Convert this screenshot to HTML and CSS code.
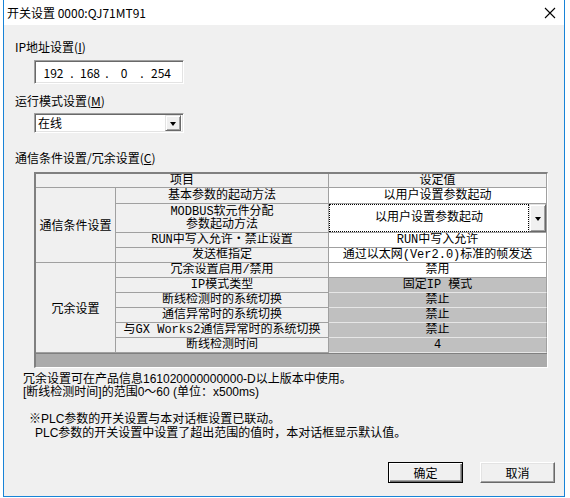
FILE: index.html
```html
<!DOCTYPE html>
<html lang="zh-CN">
<head>
<meta charset="utf-8">
<title>开关设置</title>
<link rel="stylesheet" href="styles.css">
</head>
<body>
<div class="win">
  <div class="titlebar">
    <span class="title">开关设置 0000:QJ71MT91</span>
    <span class="close">
      <svg width="12" height="12" viewBox="0 0 12 12"><path d="M1 1L11 11M11 1L1 11" stroke="#000" stroke-width="1.1" fill="none"/></svg>
    </span>
  </div>
  <div class="content">
    <div class="label lbl-ip">IP地址设置(<u>I</u>)</div>
    <div class="ipbox sunken">
      <span class="s1">192</span><span class="d1">.</span><span class="s2">168</span><span class="d2">.</span><span class="s3">0</span><span class="d3">.</span><span class="s4">254</span>
    </div>
    <div class="label lbl-mode">运行模式设置(<u>M</u>)</div>
    <div class="select sunken">
      <span class="seltext">在线</span>
      <span class="dropbtn"><span class="tri"></span></span>
    </div>
    <div class="label lbl-comm">通信条件设置/冗余设置(<u>C</u>)</div>
    <div class="tbl">
      <div class="c hdr span2">项目</div>
      <div class="c hdr val">设定值</div>
      <div class="c grp g1">通信条件设置</div>
      <div class="c item">基本参数的起动方法</div>
      <div class="c v">以用户设置参数起动</div>
      <div class="c item two">MODBUS软元件分配<br>参数起动方法</div>
      <div class="c v combo"><span class="focus">以用户设置参数起动</span><span class="dropbtn big"><span class="tri"></span></span></div>
      <div class="c item">RUN中写入允许・禁止设置</div>
      <div class="c v">RUN中写入允许</div>
      <div class="c item">发送框指定</div>
      <div class="c v">通过以太网(Ver2.0)标准的帧发送</div>
      <div class="c grp g2">冗余设置</div>
      <div class="c item">冗余设置启用/禁用</div>
      <div class="c v">禁用</div>
      <div class="c item">IP模式类型</div>
      <div class="c v dis">固定IP 模式</div>
      <div class="c item">断线检测时的系统切换</div>
      <div class="c v dis">禁止</div>
      <div class="c item">通信异常时的系统切换</div>
      <div class="c v dis">禁止</div>
      <div class="c item">与GX Works2通信异常时的系统切换</div>
      <div class="c v dis">禁止</div>
      <div class="c item">断线检测时间</div>
      <div class="c v dis">4</div>
      <div class="bar"></div>
    </div>
    <div class="notes">
      <div class="n1">冗余设置可在产品信息161020000000000-D以上版本中使用。</div>
      <div class="n2">[断线检测时间]的范围0～60 (单位：x500ms)</div>
      <div class="n3">※PLC参数的开关设置与本对话框设置已联动。</div>
      <div class="n4">PLC参数的开关设置中设置了超出范围的值时，本对话框显示默认值。</div>
    </div>
    <div class="footer">
      <button class="btn default">确定</button>
      <button class="btn">取消</button>
    </div>
  </div>
</div>
</body>
</html>
```
FILE: styles.css
```css
html, body {
  margin: 0;
  padding: 0;
  background: #ffffff;
}
body {
  font-family: "Noto Sans CJK SC", "Noto Sans", sans-serif;
  font-size: 12px;
  color: #000;
}
.win {
  margin-left: 3px;
  width: 562px;
  height: 497px;
  box-sizing: border-box;
  border-left: 1px solid #1883d7;
  border-right: 1px solid #1883d7;
  border-bottom: 1px solid #1883d7;
  display: flex;
  flex-direction: column;
}
.titlebar {
  height: 25px;
  flex: none;
  background: #fff;
  display: flex;
  align-items: center;
  padding-left: 3px;
}
.title {
  flex: 1;
  font-size: 12px;
  line-height: 16px;
}
.close {
  width: 28px;
  height: 25px;
  display: flex;
  align-items: center;
  justify-content: center;
}
.content {
  flex: 1;
  background: #f0f0f0;
  padding-left: 11px;
  display: flex;
  flex-direction: column;
  align-items: flex-start;
}
.label {
  line-height: 16px;
  height: 16px;
}
.label u { text-decoration: underline; }
.lbl-ip { margin-top: 14px; }
.lbl-mode { margin-top: 9px; }
.lbl-comm { margin-top: 17px; }
.sunken {
  box-sizing: border-box;
  background: #fff;
  border-top: 1px solid #a0a0a0;
  border-left: 1px solid #a0a0a0;
  border-right: 1px solid #ffffff;
  border-bottom: 1px solid #ffffff;
  box-shadow: inset 1px 1px 0 #696969, inset -1px -1px 0 #e3e3e3;
}
.ipbox {
  margin-top: 5px;
  margin-left: 19px;
  width: 150px;
  height: 24px;
  display: flex;
  align-items: center;
  padding-left: 8px;
  white-space: nowrap;
}
.ipbox span { display: inline-block; text-align: center; }
.s1 { width: 21px; }
.d1 { width: 16px; }
.s2 { width: 19px; }
.d2 { width: 16px; }
.s3 { width: 18px; }
.d3 { width: 18px; }
.s4 { width: 20px; }
.select {
  margin-top: 4px;
  margin-left: 19px;
  width: 150px;
  height: 20px;
  display: flex;
  align-items: center;
  padding: 2px;
}
.seltext {
  flex: 1;
  padding-left: 1px;
  line-height: 16px;
}
.dropbtn {
  width: 16px;
  height: 16px;
  box-sizing: border-box;
  background: #f0f0f0;
  border-top: 1px solid #e3e3e3;
  border-left: 1px solid #e3e3e3;
  border-right: 1px solid #696969;
  border-bottom: 1px solid #696969;
  box-shadow: inset 1px 1px 0 #fff, inset -1px -1px 0 #a0a0a0;
  display: flex;
  align-items: center;
  justify-content: center;
}
.tri {
  width: 0;
  height: 0;
  border-left: 3.5px solid transparent;
  border-right: 3.5px solid transparent;
  border-top: 4px solid #000;
  margin-top: 1px;
}
.tbl {
  margin-top: 6px;
  margin-left: 19px;
  width: 514px;
  box-sizing: border-box;
  border-top: 2px solid #808080;
  border-left: 2px solid #808080;
  border-right: 1px solid #ffffff;
  border-bottom: 1px solid #ffffff;
  display: grid;
  grid-template-columns: 80px 213px 1fr;
  grid-template-rows: 14px 16px 29px 15px 15px 15px 15px 15px 15px 15px 15px 14px;
  font-family: "Liberation Mono", "Noto Sans CJK SC", monospace;
  font-size: 12px;
  background: #f0f0f0;
}
.c {
  box-sizing: border-box;
  border-right: 1px solid #a0a0a0;
  border-bottom: 1px solid #a0a0a0;
  display: flex;
  align-items: center;
  justify-content: center;
  text-align: center;
  line-height: 14px;
  white-space: nowrap;
  overflow: hidden;
}
.span2 { grid-column: 1 / 3; }
.hdr { background: #f0f0f0; }
.grp {
  font-family: "Noto Sans CJK SC", sans-serif;
  font-size: 12px;
}
.g1 { grid-row: 2 / span 4; }
.g2 { grid-row: 6 / span 6; }
.item.two { line-height: 13px; padding-top: 1px; }
.v { background: #ffffff; }
.v.dis { background: #c0c0c0; border-bottom: 1px solid #e6e6e6; }
.combo {
  justify-content: flex-start;
  align-items: stretch;
  padding: 0;
  border-right: 1px solid #a0a0a0;
}
.focus {
  flex: 1;
  border: 1px dotted #000;
  display: flex;
  align-items: center;
  justify-content: center;
}
.dropbtn.big {
  width: 17px;
  height: auto;
}
.bar {
  grid-column: 1 / 4;
  background: #ababab;
  border-top: 1px solid #808080;
  box-sizing: border-box;
}
.notes {
  margin-left: 8px;
  margin-top: 5px;
  font-family: "Liberation Sans", "Noto Sans CJK SC", sans-serif;
  font-size: 12px;
}
.n1, .n2 {
  line-height: 13px;
  white-space: nowrap;
}
.n3 {
  margin-top: 13px;
  margin-left: 6px;
  line-height: 14px;
}
.n4 {
  margin-left: 12px;
  line-height: 14px;
}
.footer {
  align-self: flex-end;
  margin-top: 22px;
  margin-right: 9px;
  display: flex;
  gap: 17px;
}
.btn {
  width: 75px;
  height: 21px;
  box-sizing: border-box;
  padding: 0;
  font-family: "Noto Sans CJK SC", sans-serif;
  font-size: 12px;
  color: #000;
  background: #f0f0f0;
  border-top: 1px solid #ffffff;
  border-left: 1px solid #ffffff;
  border-right: 1px solid #696969;
  border-bottom: 1px solid #696969;
  box-shadow: inset -1px -1px 0 #a0a0a0, inset 1px 1px 0 #e3e3e3;
}
.btn.default {
  border: 1px solid #000;
  box-shadow: inset 1px 1px 0 #fff, inset -1px -1px 0 #696969, inset -2px -2px 0 #a0a0a0;
}
```
